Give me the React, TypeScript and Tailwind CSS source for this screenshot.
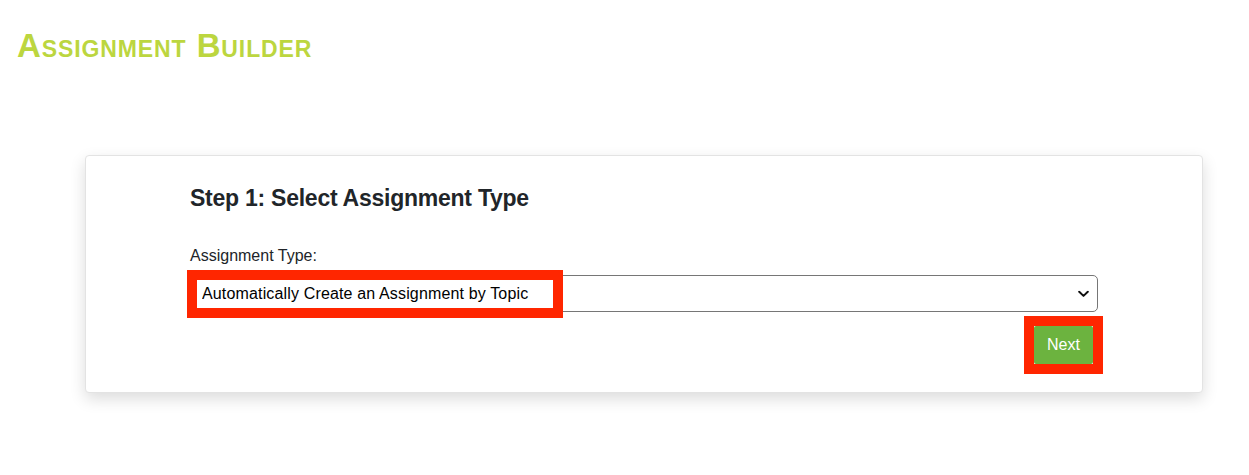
import React from "react";

const font = { fontFamily: '"Liberation Sans", Arial, Helvetica, sans-serif' };

function Chevron() {
  return (
    <svg
      className="pointer-events-none absolute right-[9px] top-1/2 -translate-y-1/2"
      width="11"
      height="7"
      viewBox="0 0 11 7"
      fill="none"
    >
      <path d="M1.2 1.2 5.5 5.4 9.8 1.2" stroke="#111" strokeWidth="2" strokeLinecap="round" strokeLinejoin="round" />
    </svg>
  );
}

export default function App() {
  return (
    <div className="min-h-[475px] w-[1249px] bg-white text-[#212529]" style={font}>
      {/* page title */}
      <div className="pl-[17px] pt-[26px]">
        <h1 className="text-[33px] font-bold leading-[40px] tracking-[0.9px] text-[#bcd63f] [font-variant-caps:small-caps]">
          Assignment Builder
        </h1>
      </div>

      {/* step card */}
      <div className="ml-[85px] mt-[89px] w-[1118px] rounded-[4px] border border-[#e3e3e3] bg-white px-[104px] pb-[28px] pt-[29px] shadow-[0_6px_16px_rgba(0,0,0,0.14)]">
        <h2 className="text-[23px] font-bold leading-[26px] tracking-[-0.25px]">Step 1: Select Assignment Type</h2>

        <label className="mt-[33px] block text-[16px] leading-6" htmlFor="type">
          Assignment Type:
        </label>

        <div className="relative mt-[7px]">
          <select
            id="type"
            className="h-[37px] w-full appearance-none rounded-[5px] border border-[#767676] bg-white pl-[11px] text-[16px] tracking-[0.15px] text-black outline-none"
            defaultValue="topic"
          >
            <option value="topic">Automatically Create an Assignment by Topic</option>
            <option value="manual">Manually Create an Assignment</option>
          </select>
          <Chevron />
          {/* annotation */}
          <div className="pointer-events-none absolute left-[-3px] top-[-5px] h-[48px] w-[376px] border-[10px] border-[#ff2600]" />
        </div>

        <div className="mt-[14px] flex justify-end pr-[5px]">
          <div className="relative">
            <button className="h-[38px] w-[59px] rounded-[2px] bg-[#6cb33f] text-[16px] text-white">Next</button>
            {/* annotation */}
            <div className="pointer-events-none absolute -left-[10px] -top-[10px] h-[58px] w-[79px] border-[10px] border-[#ff2600]" />
          </div>
        </div>
      </div>
    </div>
  );
}
